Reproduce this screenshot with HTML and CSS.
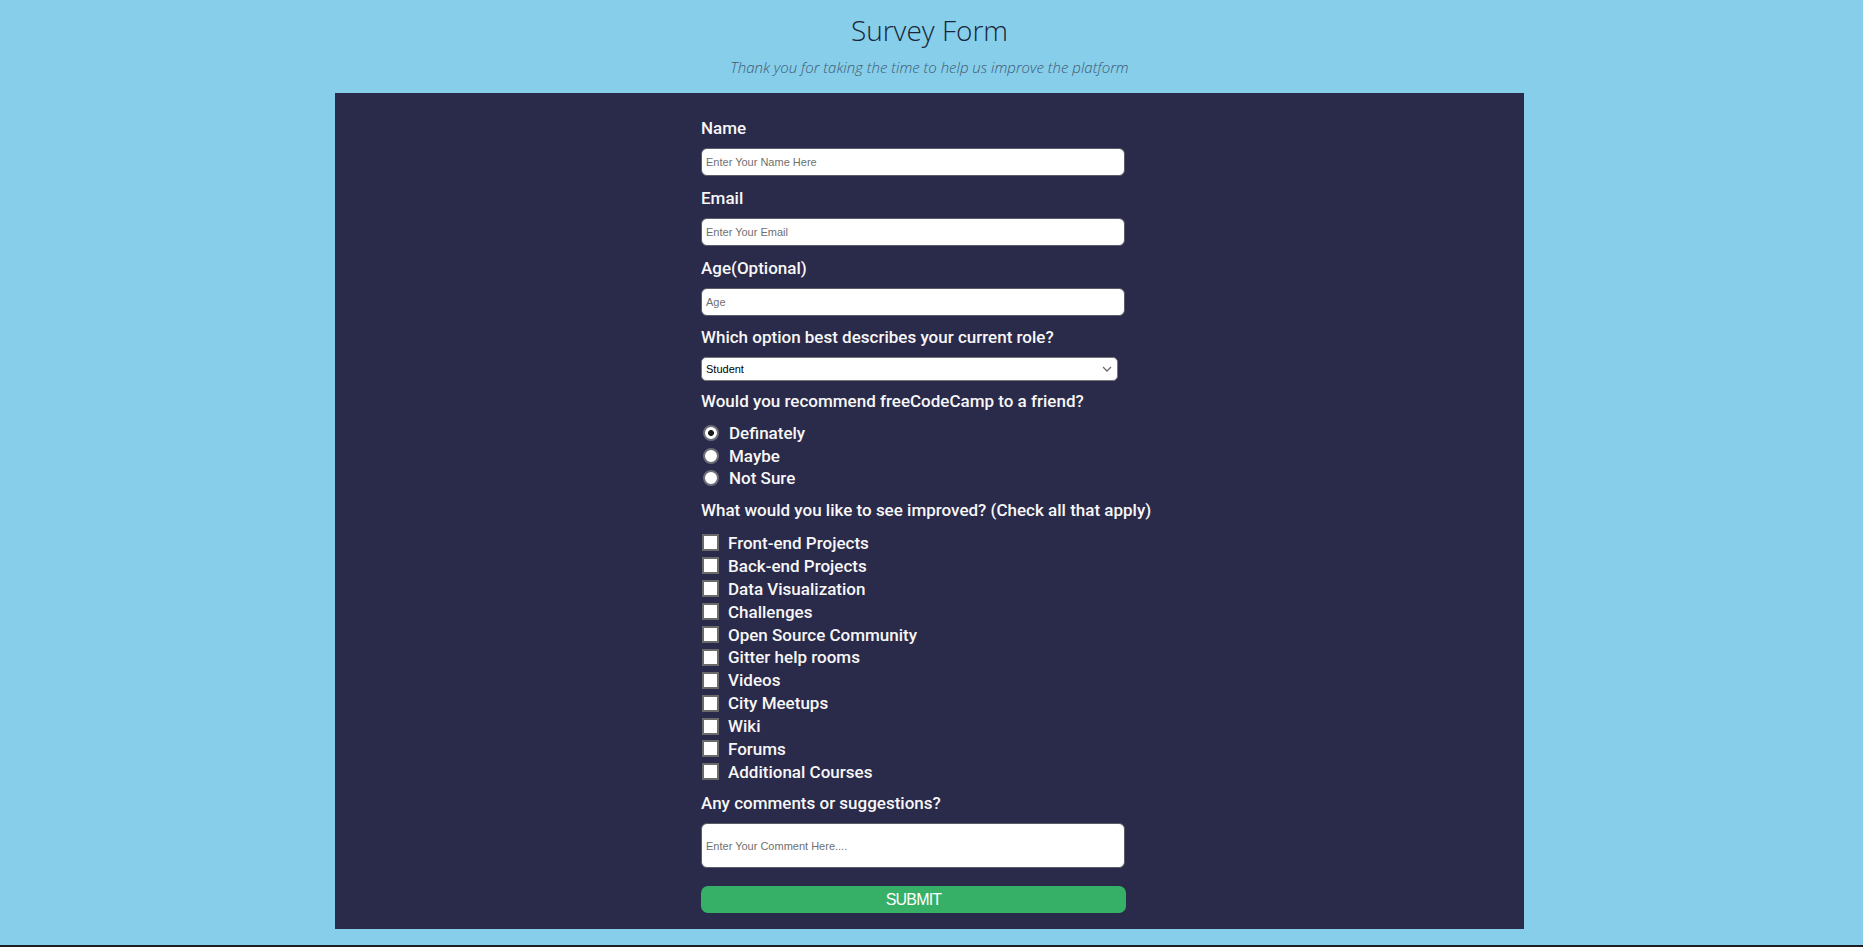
FILE: index.html
```html
<!DOCTYPE html>
<html lang="en">
<head>
<meta charset="utf-8">
<title>Survey Form</title>
<link rel="stylesheet" href="styles.css">
</head>
<body>
<div class="page">
  <header class="header">
    <h1 class="title" id="title">Survey Form</h1>
    <p class="description" id="description">Thank you for taking the time to help us improve the platform</p>
  </header>
  <main class="panel">
    <form class="survey" id="survey-form">
      <div class="field">
        <label class="label" for="name">Name</label>
        <input class="text-input" id="name" type="text" placeholder="Enter Your Name Here">
      </div>
      <div class="field">
        <label class="label" for="email">Email</label>
        <input class="text-input" id="email" type="email" placeholder="Enter Your Email">
      </div>
      <div class="field field-age">
        <label class="label" for="number">Age(Optional)</label>
        <input class="text-input" id="number" type="number" placeholder="Age">
      </div>
      <div class="field field-select">
        <label class="label" for="dropdown">Which option best describes your current role?</label>
        <div class="select-wrap">
          <select class="select" id="dropdown">
            <option>Student</option>
            <option>Full Time Job</option>
            <option>Full Time Learner</option>
            <option>Prefer not to say</option>
            <option>Other</option>
          </select>
          <svg class="chevron" width="10" height="6" viewBox="0 0 10 6" aria-hidden="true"><path d="M1 1l4 4 4-4" fill="none" stroke="#6b6b6b" stroke-width="1.3"/></svg>
        </div>
      </div>
      <div class="field field-radio">
        <p class="label">Would you recommend freeCodeCamp to a friend?</p>
        <div class="options">
          <label class="option"><input class="radio" type="radio" name="recommend" checked>Definately</label>
          <label class="option"><input class="radio" type="radio" name="recommend">Maybe</label>
          <label class="option"><input class="radio" type="radio" name="recommend">Not Sure</label>
        </div>
      </div>
      <div class="field field-check">
        <p class="label">What would you like to see improved? (Check all that apply)</p>
        <div class="options checks">
          <label class="option check-option"><input class="check" type="checkbox">Front-end Projects</label>
          <label class="option check-option"><input class="check" type="checkbox">Back-end Projects</label>
          <label class="option check-option"><input class="check" type="checkbox">Data Visualization</label>
          <label class="option check-option"><input class="check" type="checkbox">Challenges</label>
          <label class="option check-option"><input class="check" type="checkbox">Open Source Community</label>
          <label class="option check-option"><input class="check" type="checkbox">Gitter help rooms</label>
          <label class="option check-option"><input class="check" type="checkbox">Videos</label>
          <label class="option check-option"><input class="check" type="checkbox">City Meetups</label>
          <label class="option check-option"><input class="check" type="checkbox">Wiki</label>
          <label class="option check-option"><input class="check" type="checkbox">Forums</label>
          <label class="option check-option"><input class="check" type="checkbox">Additional Courses</label>
        </div>
      </div>
      <div class="field field-comment">
        <label class="label" for="comment">Any comments or suggestions?</label>
        <textarea class="textarea" id="comment" placeholder="Enter Your Comment Here...."></textarea>
      </div>
      <button class="submit" id="submit" type="submit">SUBMIT</button>
    </form>
  </main>
</div>
</body>
</html>
```

FILE: styles.css
```css
html {
  background: #1e1f21;
}

body {
  margin: 0;
  height: 945px;
  background: #87ceeb;
  overflow: hidden;
}

.page {
  width: 1859px;
}

.header {
  text-align: center;
  font-family: "Open Sans", "Liberation Sans", sans-serif;
}

.title {
  margin: 0;
  padding-top: 13px;
  font-size: 28px;
  line-height: 34px;
  font-weight: 300;
  color: #17263a;
}

.description {
  margin: 11px 0 0;
  font-size: 15px;
  line-height: 18px;
  font-style: italic;
  font-weight: 300;
  color: #3f5a73;
}

.panel {
  width: 1189px;
  margin: 17px auto 0;
  box-sizing: border-box;
  padding: 23px 0 16px 366px;
  background: #2a2a4a;
}

.survey {
  width: 425px;
  display: flex;
  flex-direction: column;
  font-family: Roboto, "Liberation Sans", sans-serif;
  font-weight: 500;
  color: #f7f7f7;
}

.field {
  display: flex;
  flex-direction: column;
  margin-bottom: 10px;
}

.label {
  display: block;
  margin: 0;
  font-size: 17px;
  line-height: 24px;
  white-space: nowrap;
}

.text-input {
  margin-top: 8px;
  width: 424px;
  height: 28px;
  box-sizing: border-box;
  border: 1px solid #5c5c66;
  border-radius: 6px;
  padding: 0 4px;
  background: #fff;
  font-family: "Liberation Sans", Arial, sans-serif;
  font-size: 11px;
  color: #222;
  outline: none;
}

.text-input::placeholder,
.textarea::placeholder {
  color: #6f6f6f;
}

.field-age {
  margin-bottom: 9px;
}

.select-wrap {
  position: relative;
  margin-top: 8px;
  width: 417px;
}

.select {
  appearance: none;
  -webkit-appearance: none;
  display: block;
  width: 417px;
  height: 24px;
  box-sizing: border-box;
  border: 1px solid #767676;
  border-radius: 5px;
  padding: 0 20px 0 4px;
  background: #fff;
  font-family: "Liberation Sans", Arial, sans-serif;
  font-size: 11px;
  color: #000;
}

.chevron {
  position: absolute;
  right: 6px;
  top: 9px;
  pointer-events: none;
}

.field-select {
  margin-bottom: 8px;
}

.options {
  display: flex;
  flex-direction: column;
  margin-top: 9px;
}

.option {
  display: flex;
  align-items: center;
  height: 22.5px;
  font-size: 17px;
  line-height: 22px;
  white-space: nowrap;
}

.radio {
  appearance: none;
  -webkit-appearance: none;
  margin: 0 10px 0 2px;
  width: 16px;
  height: 16px;
  box-sizing: border-box;
  border-radius: 50%;
  border: 2px solid #6e6e78;
  background: #fff;
}

.radio:checked {
  background: radial-gradient(circle, #1b1b1b 0 2.6px, #fff 3.3px);
}

.field-radio {
  margin-bottom: 8px;
}

.checks {
  margin-top: 10px;
}

.check-option {
  height: 22.9px;
}

.check {
  appearance: none;
  -webkit-appearance: none;
  margin: 0 9px 0 1px;
  width: 17px;
  height: 17px;
  box-sizing: border-box;
  border: 2px solid #6a6a6a;
  border-radius: 0;
  background: #fff;
}

.field-check {
  margin-bottom: 8px;
}

.textarea {
  margin-top: 8px;
  width: 424px;
  height: 45px;
  box-sizing: border-box;
  border: 1px solid #5c5c66;
  border-radius: 6px;
  padding: 16px 4px 0;
  resize: none;
  background: #fff;
  font-family: "Liberation Sans", Arial, sans-serif;
  font-size: 11px;
  line-height: 13px;
  outline: none;
}

.field-comment {
  margin-bottom: 18px;
}

.submit {
  width: 425px;
  height: 27px;
  border: none;
  border-radius: 7px;
  background: #37b067;
  color: #fff;
  font-family: "Liberation Sans", Arial, sans-serif;
  font-size: 16px;
  letter-spacing: -0.8px;
  padding: 0;
  cursor: pointer;
}
```
